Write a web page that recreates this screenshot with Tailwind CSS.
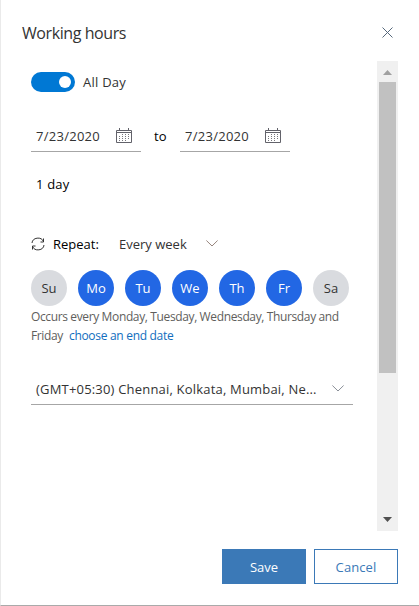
<!DOCTYPE html>
<html lang="en">
<head>
<meta charset="utf-8">
<title>Working hours</title>
<script src="https://cdn.jsdelivr.net/npm/@tailwindcss/browser@4"></script>
</head>
<body class="bg-white">
<svg class="hidden">
  <symbol id="calendar" viewBox="0 0 16 16">
    <path d="M.5 2.500h15v12H.5zM.5 4.500h15M3.500 0v3M12.500 0v3" fill="none" stroke="#62626a"/>
    <path d="M6 6.500h8M3 8.500h11M3 10.500h11M3 12.500h8" fill="none" stroke="#77777d" stroke-dasharray="1 2"/>
  </symbol>
  <symbol id="chevron" viewBox="0 0 12 7"><path d="M.4.5 6 6 11.600.5" fill="none" stroke="currentColor"/></symbol>
</svg>
<div class="flex h-[606px] w-[419px] flex-col border-b border-l border-b-[#aaa] border-l-[#eaeaea] font-['Open_Sans','Noto_Sans',sans-serif] text-[13px] leading-5 whitespace-nowrap text-[#333]">
  <header class="flex h-[61px] shrink-0 items-start justify-between pt-[21px] pr-[26px] pl-[21px]">
    <h1 class="text-[16px] leading-6 tracking-[-0.42px]">Working hours</h1>
    <svg class="mt-[6px] h-[11px] w-[11px]" viewBox="0 0 11 11"><path d="M.5.5l10 10M10.500.5l-10 10" fill="none" stroke="#56687b"/></svg>
  </header>
  <div class="flex h-[470px] shrink-0">
    <main class="w-[376px] pl-[30px]">
      <div class="flex h-[41px] items-start pt-[11px]">
        <span class="flex h-5 w-11 items-center justify-end rounded-full bg-[#0078d4] pr-1"><span class="h-3 w-3 rounded-full bg-white"></span></span>
        <span class="ml-2 tracking-[0.25px]">All Day</span>
      </div>
      <div class="mt-[18px] flex h-8">
        <div class="flex w-[110px] items-start justify-between border-b border-[#a6a6a6] pt-[6px] pr-[9px] pl-[5px]">
          <span class="tracking-[0.27px]">7/23/2020</span><svg class="mt-[2px] h-4 w-4"><use href="#calendar"/></svg>
        </div>
        <span class="w-[39px] pt-[6px] pl-[13px] text-black">to</span>
        <div class="flex w-[110px] items-start justify-between border-b border-[#a6a6a6] pt-[6px] pr-[9px] pl-[5px]">
          <span class="tracking-[0.27px]">7/23/2020</span><svg class="mt-[2px] h-4 w-4"><use href="#calendar"/></svg>
        </div>
      </div>
      <div class="mt-[22px] pl-[5px] tracking-[0.2px] text-black">1 day</div>
      <div class="mt-10 flex h-5 items-center">
        <svg class="mr-2 h-[14px] w-[14px]" viewBox="0 0 14 14"><path d="M1 6A6 5.500 0 0 1 12.500 4.500M12.500 1.500v3.500H9.500M13 8A6 5.500 0 0 1 1.500 9.500M1.500 12.500V9h3" fill="none" stroke="#333"/></svg>
        <span class="w-[66px] text-black">Repeat:</span>
        <span class="w-[87px]">Every week</span>
        <svg class="mb-0.5 h-[7px] w-3 text-[#96847c]"><use href="#chevron"/></svg>
      </div>
      <div class="mt-4 flex gap-[11px] text-white *:flex *:h-9 *:w-9 *:items-center *:justify-center *:rounded-full">
        <span class="bg-[#d9dbdf] text-[#333]">Su</span>
        <span class="bg-[#2267e4]">Mo</span>
        <span class="bg-[#2267e4]">Tu</span>
        <span class="bg-[#2267e4]">We</span>
        <span class="bg-[#2267e4]">Th</span>
        <span class="bg-[#2267e4]">Fr</span>
        <span class="bg-[#d9dbdf] text-[#333]">Sa</span>
      </div>
      <div class="mt-px text-[12px] leading-[19px] tracking-[-0.37px] text-[#605e5c]">Occurs every Monday, Tuesday, Wednesday, Thursday and<br>Friday<span class="ml-[6px] tracking-[-0.3px] text-[#106ebe]">choose an end date</span></div>
      <div class="mt-[28px] flex h-[32px] w-[322px] items-start border-b border-[#a6a6a6] pt-[6px] pl-[5px]">
        <span class="w-[296px] tracking-[0.19px]">(GMT+05:30) Chennai, Kolkata, Mumbai, Ne...</span>
        <svg class="mt-[6px] h-[7px] w-3 text-[#8a8f98]"><use href="#chevron"/></svg>
      </div>
    </main>
    <div class="flex w-[21px] flex-col items-center bg-[#f0f0f0]">
      <svg class="mt-[9px] h-[5px] w-[9px]" viewBox="0 0 9 5"><path d="M0 5 4.500 0 9 5z" fill="#a0a0a0"/></svg>
      <div class="mt-[7px] h-[291px] w-[17px] bg-[#c1c1c1]"></div>
      <svg class="mt-auto mb-[9px] h-[5px] w-[9px]" viewBox="0 0 9 5"><path d="M0 0h9L4.500 5z" fill="#505050"/></svg>
    </div>
  </div>
  <footer class="mt-[18px] flex h-[35px] gap-2 pl-[221px]">
    <button class="w-[84px] bg-[#3b79b7] text-white">Save</button>
    <button class="w-[84px] border border-[#3b79b7] tracking-[0.1px] text-[#3b79b7]">Cancel</button>
  </footer>
</div>
</body>
</html>
